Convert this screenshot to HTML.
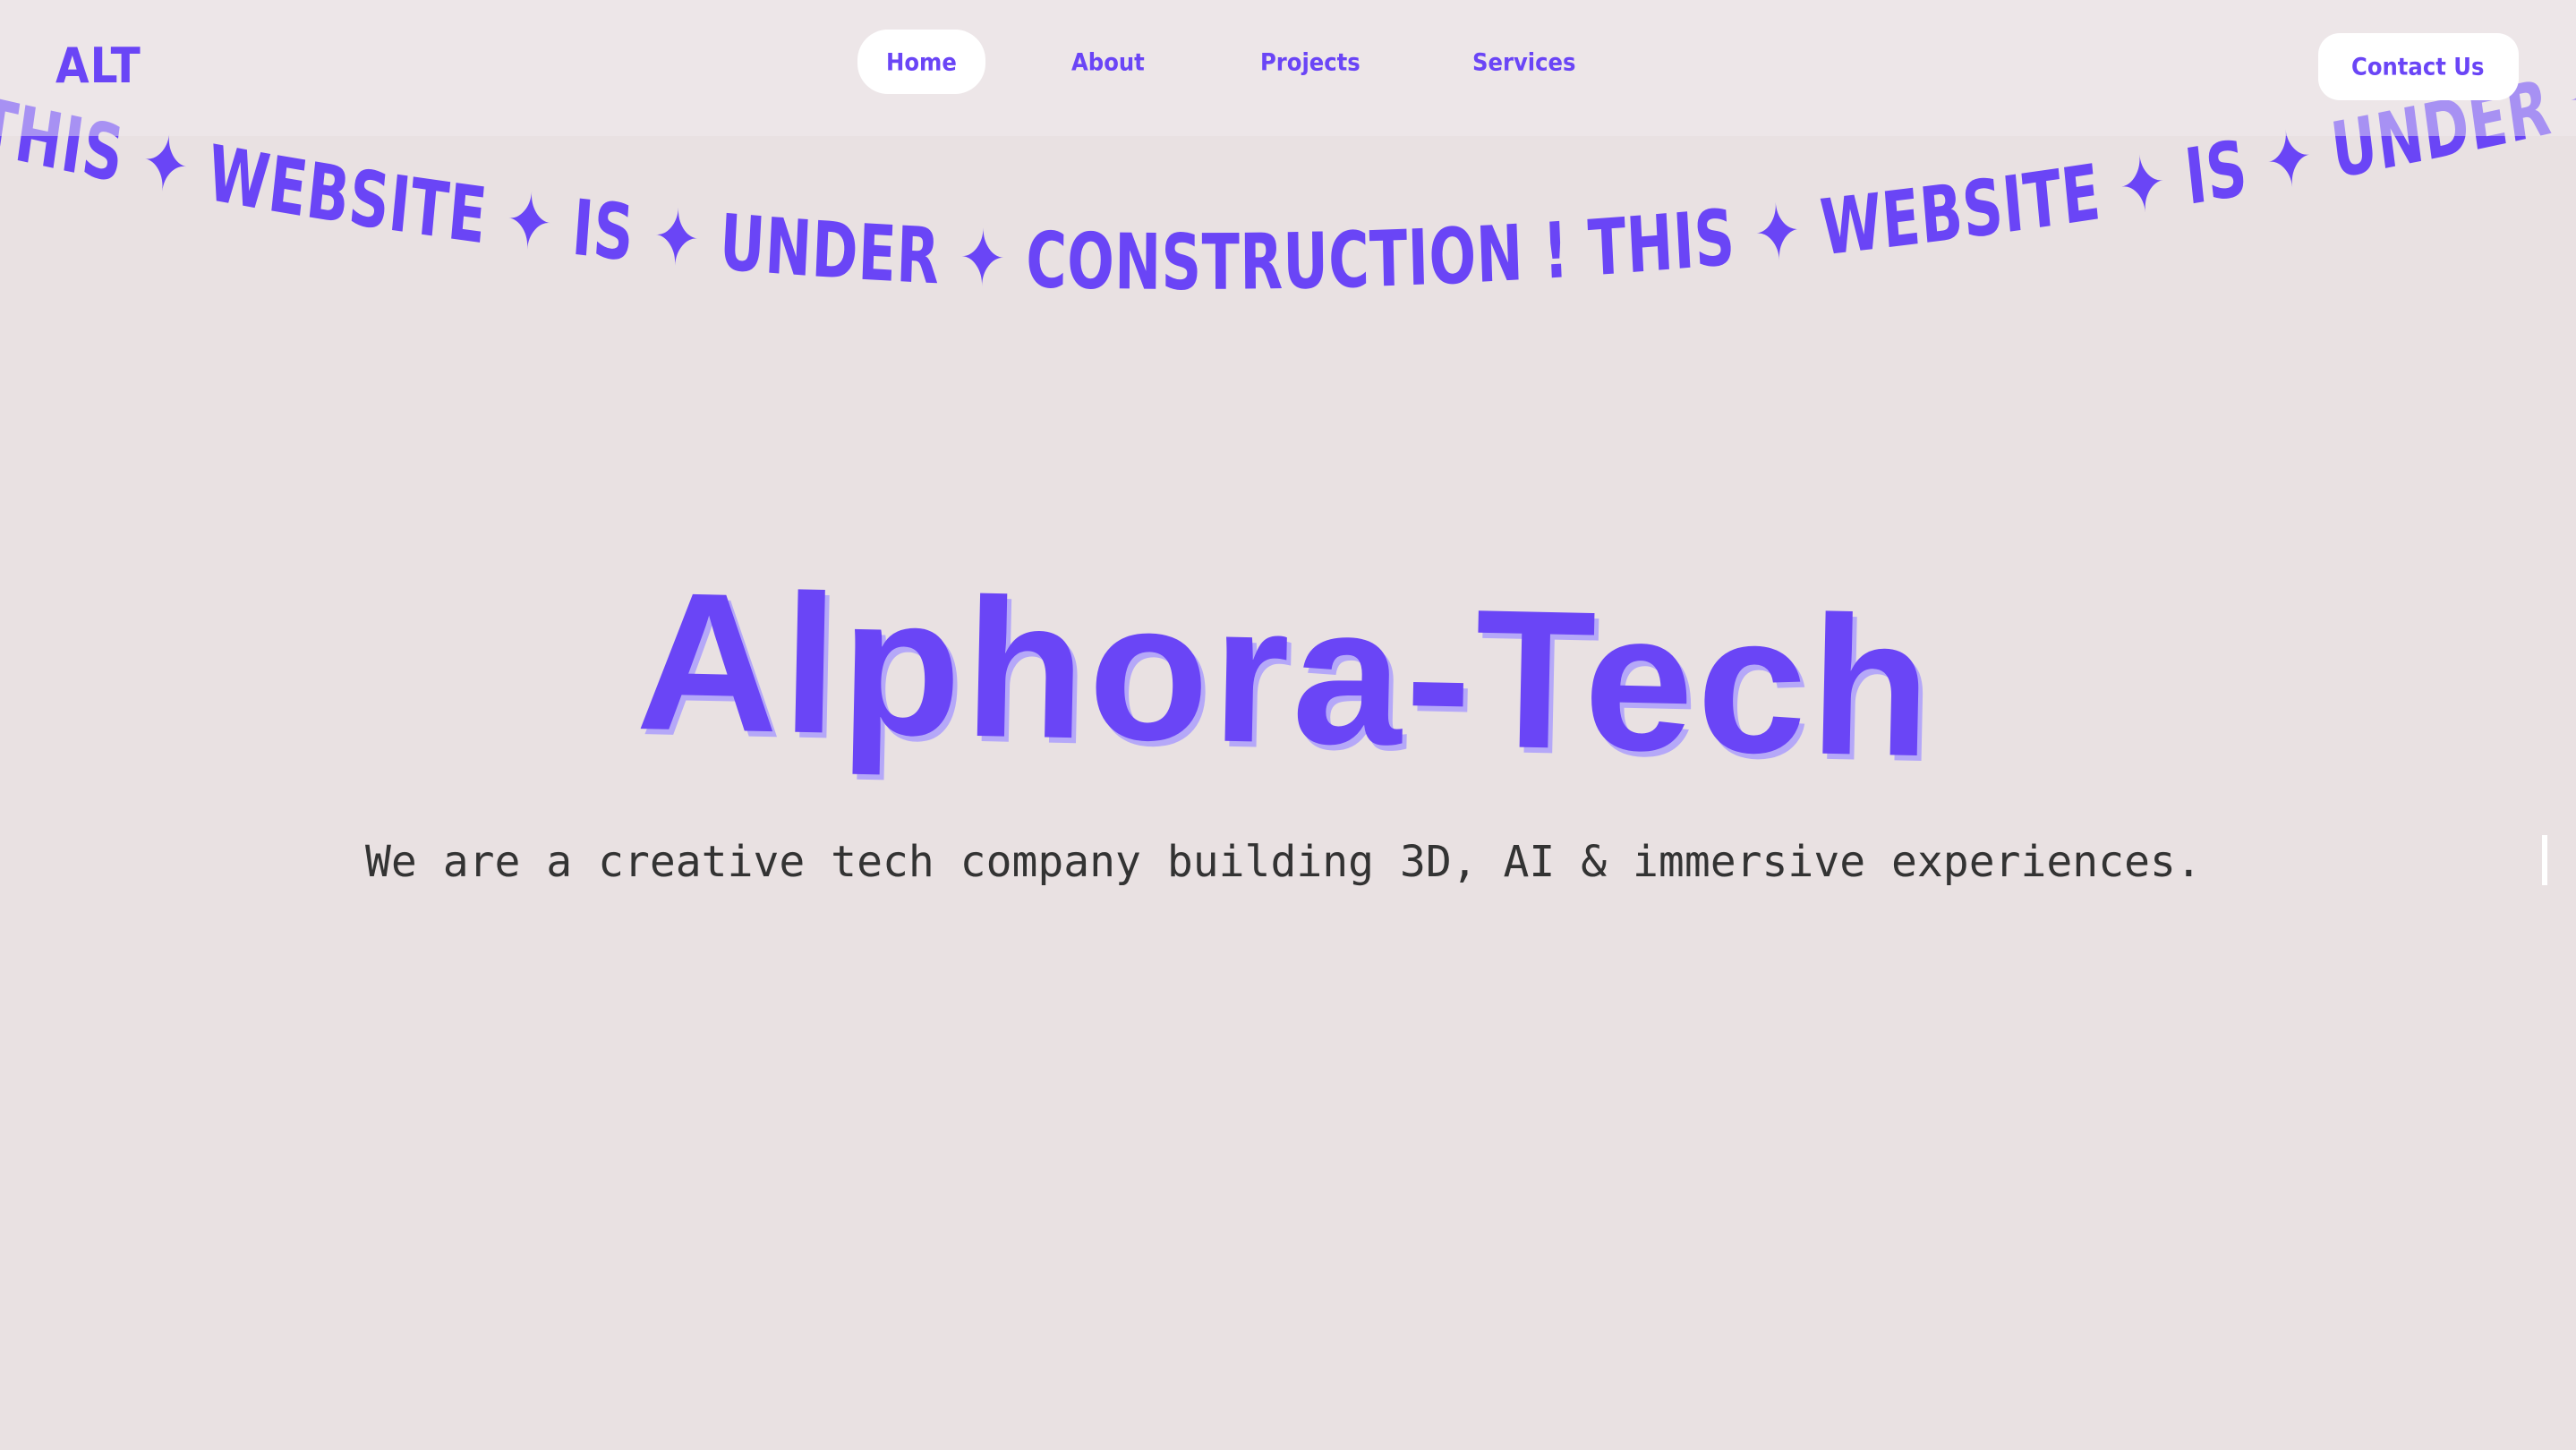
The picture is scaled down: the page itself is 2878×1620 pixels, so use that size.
<!DOCTYPE html>
<html><head><meta charset="utf-8"><style>
html,body{margin:0;padding:0}
body{width:2878px;height:1620px;position:relative;overflow:hidden;background:#e9e1e2;font-family:"DejaVu Sans Condensed","DejaVu Sans",sans-serif}
#curve{position:absolute;left:0;top:0;z-index:1}
header{position:absolute;left:0;top:0;width:2878px;height:152px;background:rgba(242,238,239,0.45);z-index:2}
.logo{position:absolute;left:62px;top:42px;font-size:54px;font-weight:bold;color:#6a45f6;letter-spacing:1px}
.nav{position:absolute;top:70px;transform:translateY(-50%);font-size:27px;font-weight:bold;color:#6a45f6}
.pill{position:absolute;background:#fff;border-radius:34px}
.title{position:absolute;left:714px;top:628px;font-family:"Liberation Sans",Arial,sans-serif;font-weight:bold;font-size:220px;letter-spacing:4px;color:#6a45f6;text-shadow:5px 6px 0 #b5a8f8;transform:rotate(1.2deg);transform-origin:left top;white-space:nowrap;line-height:1}
.tag{position:absolute;left:408px;top:935px;font-family:"DejaVu Sans Mono","Liberation Mono",monospace;font-size:48px;color:#333;white-space:nowrap}
.bar{position:absolute;left:2840px;top:933px;width:6px;height:56px;background:#fff}
</style></head><body>
<svg id="curve" width="2878" height="1620" viewBox="0 0 2878 1620">
<defs><path id="arc" d="M -35 168 Q 1744 500 3718 120"/></defs>
<g transform="scale(0.8,1)">
<text font-family="DejaVu Sans Condensed, DejaVu Sans, sans-serif" font-weight="bold" font-size="86" fill="#6a45f6" letter-spacing="0.8">
<textPath href="#arc" startOffset="0">THIS ✦ WEBSITE ✦ IS ✦ UNDER ✦ CONSTRUCTION ! THIS ✦ WEBSITE ✦ IS ✦ UNDER ✦ CONSTRUCTION</textPath>
</text>
</g>
</svg>
<header>
<div class="logo">ALT</div>
<div class="pill" style="left:958px;top:33px;width:143px;height:72px"></div>
<div class="nav" style="left:990px">Home</div>
<div class="nav" style="left:1197px">About</div>
<div class="nav" style="left:1408px">Projects</div>
<div class="nav" style="left:1645px">Services</div>
<div class="pill" style="left:2590px;top:37px;width:224px;height:75px;border-radius:24px"></div>
<div class="nav" style="left:2627px;top:75px">Contact Us</div>
</header>
<div class="title">Alphora-Tech</div>
<div class="tag">We are a creative tech company building 3D, AI &amp; immersive experiences.</div>
<div class="bar"></div>
</body></html>
